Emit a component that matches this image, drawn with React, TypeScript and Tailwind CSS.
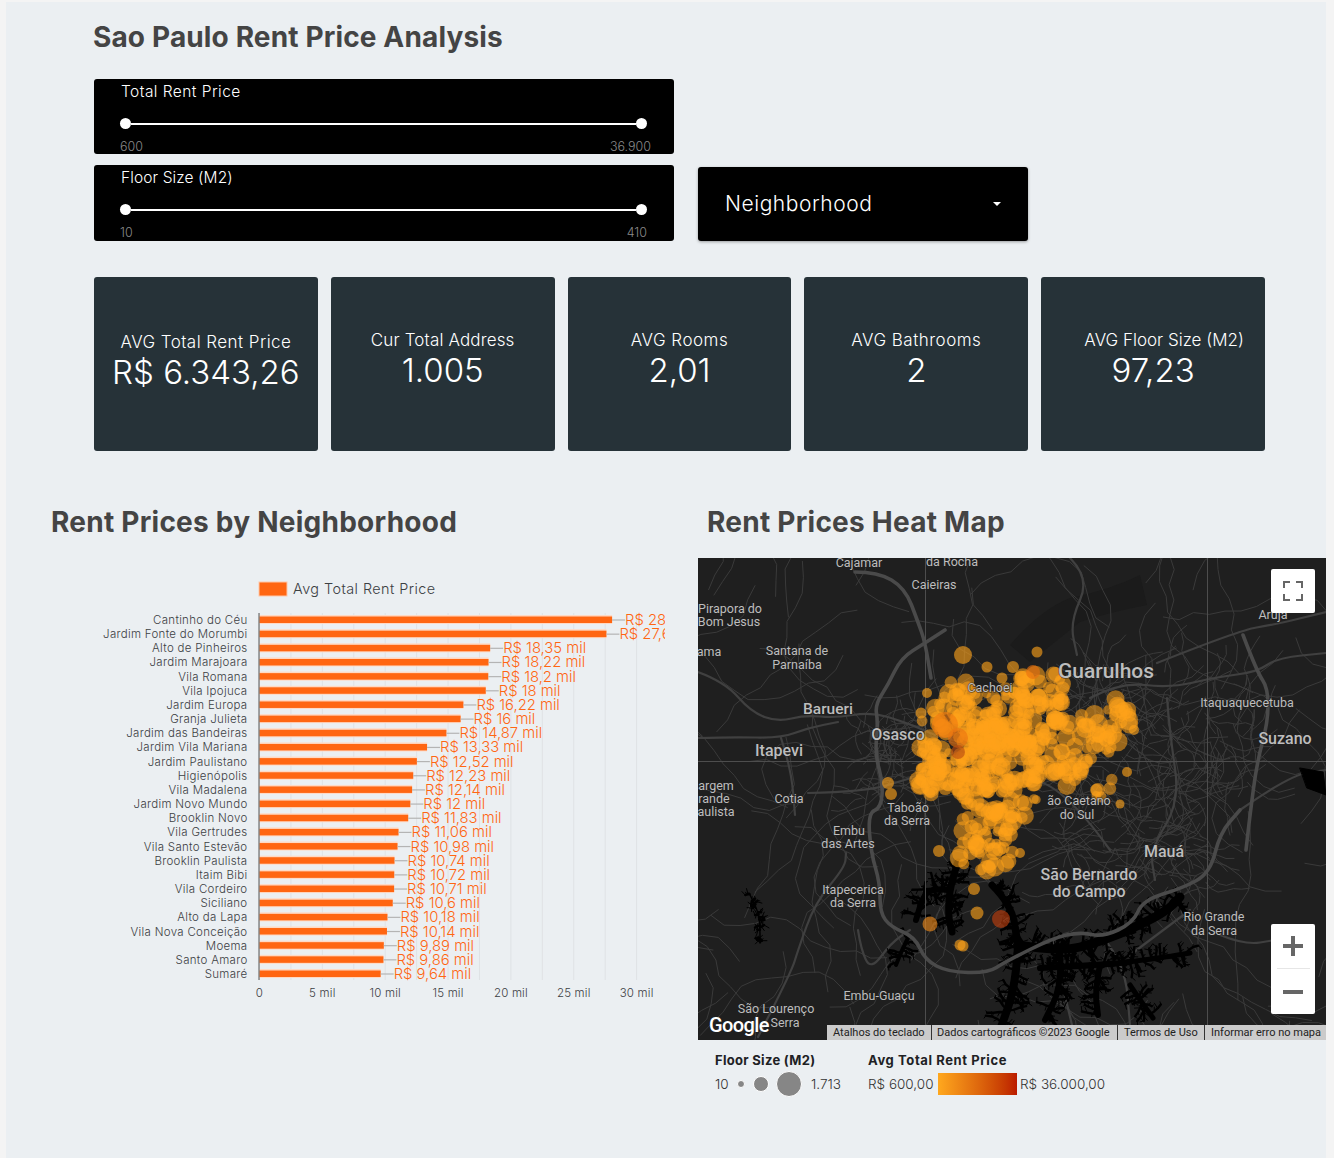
import React from "react";

const FONT = "font-['Inter','Liberation_Sans',sans-serif]";
const ROBOTO = "Roboto, 'Liberation Sans', sans-serif";

const rentRows: [string, number, string][] = [
  ["Cantinho do Céu", 28.05, "R$ 28 mil"],
  ["Jardim Fonte do Morumbi", 27.6, "R$ 27,6 mil"],
  ["Alto de Pinheiros", 18.35, "R$ 18,35 mil"],
  ["Jardim Marajoara", 18.22, "R$ 18,22 mil"],
  ["Vila Romana", 18.2, "R$ 18,2 mil"],
  ["Vila Ipojuca", 18, "R$ 18 mil"],
  ["Jardim Europa", 16.22, "R$ 16,22 mil"],
  ["Granja Julieta", 16, "R$ 16 mil"],
  ["Jardim das Bandeiras", 14.87, "R$ 14,87 mil"],
  ["Jardim Vila Mariana", 13.33, "R$ 13,33 mil"],
  ["Jardim Paulistano", 12.52, "R$ 12,52 mil"],
  ["Higienópolis", 12.23, "R$ 12,23 mil"],
  ["Vila Madalena", 12.14, "R$ 12,14 mil"],
  ["Jardim Novo Mundo", 12, "R$ 12 mil"],
  ["Brooklin Novo", 11.83, "R$ 11,83 mil"],
  ["Vila Gertrudes", 11.06, "R$ 11,06 mil"],
  ["Vila Santo Estevão", 10.98, "R$ 10,98 mil"],
  ["Brooklin Paulista", 10.74, "R$ 10,74 mil"],
  ["Itaim Bibi", 10.72, "R$ 10,72 mil"],
  ["Vila Cordeiro", 10.71, "R$ 10,71 mil"],
  ["Siciliano", 10.6, "R$ 10,6 mil"],
  ["Alto da Lapa", 10.18, "R$ 10,18 mil"],
  ["Vila Nova Conceição", 10.14, "R$ 10,14 mil"],
  ["Moema", 9.89, "R$ 9,89 mil"],
  ["Santo Amaro", 9.86, "R$ 9,86 mil"],
  ["Sumaré", 9.64, "R$ 9,64 mil"],
];

const kpis = [
  { label: "AVG Total Rent Price", value: "R$ 6.343,26", pad: "pb-[6px]", text: "tracking-[0.45px]" },
  { label: "Cur Total Address", value: "1.005", pad: "pb-[10px]", text: "tracking-[0.15px]" },
  { label: "AVG Rooms", value: "2,01", pad: "pb-[10px]", text: "tracking-[0.5px]" },
  { label: "AVG Bathrooms", value: "2", pad: "pb-[10px]", text: "tracking-[0.5px]" },
  { label: "AVG Floor Size (M2)", value: "97,23", pad: "pb-[10px]", text: "ml-[22px]" },
];

// small seeded random so the map looks the same on every load
function makeRandom(seed: number) {
  let s = seed;
  return () => {
    s = (s + 0x6d2b79f5) | 0;
    let t = Math.imul(s ^ (s >>> 15), 1 | s);
    t = (t + Math.imul(t ^ (t >>> 7), 61 | t)) ^ t;
    return ((t ^ (t >>> 14)) >>> 0) / 4294967296;
  };
}

type Pt = [number, number];
const line = (pts: Pt[]) => pts.map((p, i) => `${i ? "L" : "M"}${p[0].toFixed(1)} ${p[1].toFixed(1)}`).join(" ");

// rounds the corners of a road
function smooth(pts: Pt[]) {
  let d = `M${pts[0][0]} ${pts[0][1]}`;
  for (let i = 1; i < pts.length - 1; i++) {
    const mx = (pts[i][0] + pts[i + 1][0]) / 2;
    const my = (pts[i][1] + pts[i + 1][1]) / 2;
    d += ` Q${pts[i][0]} ${pts[i][1]} ${mx} ${my}`;
  }
  const last = pts[pts.length - 1];
  return `${d} L${last[0]} ${last[1]}`;
}

const majorRoads: Pt[][] = [
  [[855, 572], [878, 572], [905, 588], [918, 622], [925, 642], [931, 678]],
  [[945, 630], [925, 643], [901, 658], [888, 685], [875, 705], [878, 722], [875, 755], [883, 782], [881, 808], [868, 813], [871, 853], [880, 883], [880, 913], [891, 927], [915, 937], [925, 960], [948, 972], [988, 973], [1005, 962], [1053, 938], [1080, 932], [1103, 937], [1133, 923], [1143, 900], [1183, 888], [1210, 873], [1220, 833], [1240, 810]],
  [[1243, 635], [1257, 672], [1268, 688], [1268, 722], [1257, 762], [1250, 815], [1246, 850]],
];
const midRoads: Pt[][] = [
  [[1157, 663], [1240, 630], [1273, 625], [1326, 612]],
  [[1090, 698], [1120, 682], [1170, 688], [1217, 677], [1257, 672], [1277, 658], [1326, 653]],
  [[1070, 558], [1090, 578], [1070, 622], [1077, 655]],
  [[1167, 698], [1170, 735], [1180, 802], [1150, 850], [1155, 880]],
  [[698, 672], [725, 682], [751, 712], [778, 722], [805, 715], [835, 718], [871, 712], [905, 722], [935, 735]],
  [[698, 738], [731, 737], [781, 738], [808, 728], [838, 722]],
  [[781, 738], [791, 768], [795, 815]],
  [[808, 793], [865, 792], [911, 778]],
  [[758, 1037], [791, 973], [798, 950], [815, 903], [845, 867], [846, 853]],
  [[858, 930], [861, 950], [871, 970], [891, 943], [910, 930]],
  [[1053, 938], [1060, 975], [1072, 1025]],
  [[1103, 937], [1125, 965], [1130, 1025]],
  [[1110, 850], [1060, 780], [1000, 780]],
  [[1240, 810], [1290, 775], [1326, 770]],
  [[1190, 910], [1130, 955]],
  [[1220, 935], [1245, 945], [1275, 940]],
];

const regions = [
  { x: 698, y: 558, w: 628, h: 482, n: 120, steps: 12, len: 16 },
  { x: 1060, y: 670, w: 200, h: 140, n: 120, steps: 6, len: 9 },
  { x: 860, y: 710, w: 70, h: 90, n: 60, steps: 5, len: 7 },
  { x: 1060, y: 810, w: 150, h: 80, n: 65, steps: 6, len: 8 },
];
const minorRoads = (() => {
  const r = makeRandom(11);
  const out: string[] = [];
  regions.forEach((g) => {
    for (let i = 0; i < g.n; i++) {
      let x = g.x + r() * g.w;
      let y = g.y + r() * g.h;
      let a = r() * Math.PI * 2;
      const pts: Pt[] = [[x, y]];
      for (let k = 0; k < g.steps; k++) {
        a += (r() - 0.5) * 1.3;
        x += Math.cos(a) * g.len;
        y += Math.sin(a) * g.len;
        pts.push([x, y]);
      }
      out.push(line(pts));
    }
  });
  return out;
})();

// reservoirs: each arm is a spine, side inlets fork off it and get thinner
const waterSpines: { pts: Pt[]; w: number }[] = [
  { pts: [[958, 862], [950, 885], [948, 915], [952, 932]], w: 7 },
  { pts: [[950, 890], [930, 888], [922, 900], [916, 920]], w: 6 },
  { pts: [[908, 938], [902, 950], [896, 965]], w: 4 },
  { pts: [[992, 885], [1012, 905], [1018, 945]], w: 7 },
  { pts: [[1018, 945], [1060, 952], [1100, 942], [1140, 925], [1168, 910], [1180, 897]], w: 9 },
  { pts: [[1018, 945], [1016, 985], [1000, 1030]], w: 8 },
  { pts: [[1060, 950], [1062, 985], [1045, 1020]], w: 6 },
  { pts: [[1100, 965], [1095, 990], [1098, 1015]], w: 6 },
  { pts: [[1128, 962], [1160, 958], [1190, 953]], w: 5 },
  { pts: [[1130, 985], [1140, 1000], [1153, 1018]], w: 5 },
  { pts: [[1040, 968], [1100, 965], [1130, 962]], w: 6 },
  { pts: [[749, 893], [758, 910], [760, 925], [760, 943]], w: 1.5 },
];
const waterInlets = (() => {
  const r = makeRandom(5);
  const thick: string[] = [];
  const thin: string[] = [];
  waterSpines.forEach((s) => {
    const reach = s.w < 3 ? 5 : 10 + s.w;
    for (let i = 0; i < s.pts.length - 1; i++) {
      const [a, b] = [s.pts[i], s.pts[i + 1]];
      const count = Math.round(Math.hypot(b[0] - a[0], b[1] - a[1]) / 3);
      const dir = Math.atan2(b[1] - a[1], b[0] - a[0]);
      for (let k = 0; k < count; k++) {
        const t = r();
        const side = r() < 0.5 ? -1 : 1;
        let x = a[0] + (b[0] - a[0]) * t;
        let y = a[1] + (b[1] - a[1]) * t;
        let ang = dir + side * (Math.PI / 2 + (r() - 0.5) * 1.2);
        const pts: Pt[] = [[x, y]];
        const stepLen = (reach * (0.5 + r() * 0.6)) / 3;
        for (let n = 0; n < 3; n++) {
          ang += (r() - 0.5) * 0.9;
          x += Math.cos(ang) * stepLen;
          y += Math.sin(ang) * stepLen;
          pts.push([x, y]);
          const fork = ang + (r() < 0.5 ? -1 : 1) * (0.7 + r() * 0.8);
          const fl = 2 + r() * 4;
          thin.push(`M${x.toFixed(1)} ${y.toFixed(1)} L${(x + Math.cos(fork) * fl).toFixed(1)} ${(y + Math.sin(fork) * fl).toFixed(1)}`);
        }
        thick.push(line(pts));
      }
    }
  });
  return { thick: thick.join(" "), thin: thin.join(" ") };
})();

const clusters = [
  { x: 965, y: 745, rx: 48, ry: 55, n: 85 },
  { x: 1000, y: 770, rx: 46, ry: 55, n: 125 },
  { x: 1005, y: 720, rx: 55, ry: 32, n: 62 },
  { x: 1038, y: 692, rx: 26, ry: 28, n: 34 },
  { x: 1062, y: 745, rx: 36, ry: 28, n: 46 },
  { x: 1105, y: 725, rx: 28, ry: 28, n: 36 },
  { x: 1095, y: 778, rx: 32, ry: 20, n: 14 },
  { x: 985, y: 840, rx: 30, ry: 36, n: 48 },
  { x: 932, y: 775, rx: 18, ry: 34, n: 26 },
  { x: 950, y: 690, rx: 28, ry: 18, n: 10 },
];
const heatDots = (() => {
  const r = makeRandom(42);
  const out: { x: number; y: number; r: number }[] = [];
  clusters.forEach((c) => {
    for (let i = 0; i < c.n; i++) {
      const a = r() * Math.PI * 2;
      const d = Math.sqrt(r());
      out.push({ x: c.x + Math.cos(a) * d * c.rx, y: c.y + Math.sin(a) * d * c.ry, r: 4.5 + r() * 5.5 });
    }
  });
  return out;
})();

const outliers: [number, number, number, string][] = [
  [963, 655, 9, "#ffa31a"], [987, 667, 5.5, "#ffa31a"], [1002, 678, 5.5, "#ffa31a"], [1013, 667, 6, "#ffa31a"],
  [1037, 652, 5.5, "#ffa31a"], [921, 713, 5.5, "#ffa31a"], [888, 783, 6, "#ffa31a"], [891, 794, 6, "#ffa31a"],
  [927, 693, 5, "#ffa31a"], [939, 851, 6, "#ffa31a"], [974, 889, 6, "#ffa31a"], [977, 913, 6.5, "#ffa31a"],
  [930, 924, 7.5, "#f08a1a"], [1001, 919, 9, "#c4400f"], [960, 945, 5.5, "#ffa31a"], [963, 946, 5.5, "#ffa31a"],
  [1134, 730, 5, "#ffa31a"], [1127, 772, 5, "#ffa31a"], [1120, 804, 4.5, "#ffa31a"], [1020, 853, 5, "#ffa31a"],
  [945, 725, 13, "#f07a10"], [958, 738, 10, "#ee7410"], [958, 752, 7, "#b84a10"], [1033, 672, 7, "#e8700f"],
];

const mapLabels: [string, number, number, number, number?][] = [
  ["Cajamar", 859, 567, 12.5], ["da Rocha", 952, 566, 12.5], ["Caieiras", 934, 589, 12.5],
  ["Pirapora do", 730, 613, 12.5], ["Bom Jesus", 729, 626, 12.5], ["ama", 709, 656, 12.5],
  ["Santana de", 797, 655, 12.5], ["Parnaíba", 797, 669, 12.5], ["Barueri", 828, 714, 15.5, 500],
  ["Osasco", 898, 740, 16, 500], ["Itapevi", 779, 756, 16, 500], ["argem", 716, 790, 12.5],
  ["rande", 714, 803, 12.5], ["aulista", 716, 816, 12.5], ["Cotia", 789, 803, 12.5],
  ["Taboão", 908, 812, 12.5], ["da Serra", 907, 825, 12.5], ["Cachoei", 990, 692, 12.5],
  ["Guarulhos", 1106, 678, 21, 500], ["Itaquaquecetuba", 1247, 707, 12.5], ["Suzano", 1285, 744, 16, 500],
  ["Arujá", 1273, 619, 12.5], ["Mauá", 1164, 857, 16, 500], ["ão Caetano", 1079, 805, 12.5], ["do Sul", 1077, 819, 12.5],
  ["São Bernardo", 1089, 880, 16, 500], ["do Campo", 1089, 897, 16, 500], ["Rio Grande", 1214, 921, 12.5],
  ["da Serra", 1214, 935, 12.5], ["Embu", 849, 835, 12.5], ["das Artes", 848, 848, 12.5],
  ["Itapecerica", 853, 894, 12.5], ["da Serra", 853, 907, 12.5], ["Embu-Guaçu", 879, 1000, 12.5],
  ["São Lourenço", 776, 1013, 12.5], ["Serra", 785, 1027, 12.5],
];

function Slider({ label, min, max, wide }: { label: string; min: string; max: string; wide?: boolean }) {
  return (
    <div className="h-full overflow-hidden rounded-[3px] bg-black pr-[27px] pl-[26px]">
      <div className={`pt-[3px] pl-px text-[15.5px] leading-[20px] font-light text-white ${wide ? "tracking-[0.45px]" : "tracking-[0.1px]"}`}>{label}</div>
      <div className="mt-[16px] flex items-center">
        <div className="h-[11px] w-[11px] rounded-full bg-white"></div>
        <div className="h-[2px] flex-1 bg-white"></div>
        <div className="h-[11px] w-[11px] rounded-full bg-white"></div>
      </div>
      <div className={`mt-[10px] flex justify-between text-[12.5px] leading-[16px] font-light text-[#8a8a8a] ${wide ? "-mr-[4px]" : ""}`}>
        <span>{min}</span>
        <span>{max}</span>
      </div>
    </div>
  );
}

function RentChart() {
  const x0 = 259.5;
  const scale = 12.57;
  const ticks = [0, 5, 10, 15, 20, 25, 30];
  return (
    <svg viewBox="90 570 575 440" width={575} height={440} className="block overflow-hidden" fontFamily="Inter, sans-serif">
      <rect x={259} y={582} width={28} height={14} fill="#ff6612" stroke="#ffc7a8" strokeWidth={1} />
      <text x={293} y={594} fontSize={14.4} letterSpacing={0.45} fontWeight={300} fill="#3c4043">Avg Total Rent Price</text>
      {Array.from({ length: 13 }).map((_, i) => (
        <line key={i} x1={x0 + i * 2.5 * scale} x2={x0 + i * 2.5 * scale} y1={613} y2={980} stroke="#dfe2e5" strokeWidth={1} />
      ))}
      {rentRows.map(([name, v, text], i) => {
        const y = 620 + i * 14.16;
        const end = x0 + v * scale;
        return (
          <g key={name}>
            <rect x={x0} y={y - 5} width={end - x0} height={9} fill="#ffd9c4" />
            <rect x={x0} y={y - 3.5} width={end - x0} height={6.5} fill="#ff6612" />
            <line x1={end} x2={end + 13} y1={y} y2={y} stroke="#b4b4b4" strokeWidth={1.2} />
            <text x={247.5} y={y + 4} textAnchor="end" fontSize={11.5} letterSpacing={0.3} fontWeight={300} fill="#3c4043">{name}</text>
            <text x={end + 13} y={y + 5} fontSize={14.8} fontWeight={300} fill="#ff6612">{text}</text>
          </g>
        );
      })}
      <line x1={259} x2={259} y1={613} y2={980} stroke="#555" strokeWidth={1} />
      {ticks.map((t) => (
        <text key={t} x={x0 + t * scale} y={997} textAnchor="middle" fontSize={11.5} letterSpacing={0.2} fontWeight={300} fill="#3c4043">
          {t === 0 ? "0" : `${t} mil`}
        </text>
      ))}
    </svg>
  );
}

function HeatMap() {
  return (
    <div className="relative h-[482px] w-[628px] overflow-hidden bg-[#1f1f1f]">
      <svg viewBox="698 558 628 482" width={628} height={482} className="block">
        <path d="M1010 645 Q1040 610 1070 598 Q1110 590 1140 575 L1147 605 Q1110 612 1080 622 L1030 662 Z" fill="#1b1b1b" />
        <g fill="none" strokeLinejoin="round" strokeLinecap="round">
          {minorRoads.map((d, i) => <path key={i} d={d} stroke="#3a3a3a" strokeWidth={1} />)}
          {midRoads.map((p, i) => <path key={i} d={smooth(p)} stroke="#404040" strokeWidth={2.2} />)}
        </g>
        <g fill="none" stroke="#000" strokeLinecap="round" strokeLinejoin="round">
          {waterSpines.map((s, i) => <path key={i} d={smooth(s.pts)} strokeWidth={s.w} />)}
          <path d={waterInlets.thick} strokeWidth={2.4} />
          <path d={waterInlets.thin} strokeWidth={1} />
          <path d="M1300 768 L1323 772 L1326 795 L1307 788 Z" fill="#000" strokeWidth={1} />
        </g>
        <g fill="none" strokeLinejoin="round" strokeLinecap="round">
          {majorRoads.map((p, i) => <path key={i} d={smooth(p)} stroke="#4a4a4a" strokeWidth={3.6} />)}
        </g>
        <line x1={925.5} x2={925.5} y1={558} y2={1040} stroke="#4d4d4d" />
        <line x1={1207.5} x2={1207.5} y1={558} y2={1040} stroke="#4d4d4d" />
        <line x1={698} x2={1326} y1={761.5} y2={761.5} stroke="#4d4d4d" />
        {heatDots.map((d, i) => <circle key={i} cx={d.x} cy={d.y} r={d.r} fill="#ffa31a" fillOpacity={0.55} />)}
        {outliers.map(([x, y, r, c], i) => <circle key={i} cx={x} cy={y} r={r} fill={c} fillOpacity={0.62} />)}
        {mapLabels.map(([text, x, y, size, weight], i) => (
          <text
            key={i}
            x={x}
            y={y}
            textAnchor="middle"
            fontFamily={ROBOTO}
            fontSize={size}
            fontWeight={weight ?? 400}
            fill="#bdbdbd"
            stroke="#1f1f1f"
            strokeOpacity={0.6}
            strokeWidth={1.5}
            paintOrder="stroke"
          >
            {text}
          </text>
        ))}
      </svg>

      <span className="absolute bottom-[3px] left-[11px] font-['Roboto',sans-serif] text-[20px] leading-[24px] font-medium tracking-[-0.6px] text-white">Google</span>

      {/* fullscreen */}
      <div className="absolute top-[11px] left-[573px] flex h-[44px] w-[44px] items-center justify-center rounded-[2px] bg-white">
        <svg width="20" height="20" viewBox="0 0 20 20" fill="none" stroke="#666" strokeWidth="2">
          <path d="M1 7V1H7M13 1H19V7M19 13V19H13M7 19H1V13" />
        </svg>
      </div>

      {/* zoom */}
      <div className="absolute top-[366px] left-[573px] flex h-[90px] w-[44px] flex-col items-center rounded-[2px] bg-white">
        <div className="flex h-[44px] items-center justify-center">
          <svg width="20" height="20" viewBox="0 0 20 20" fill="#666"><path d="M8 0h4v8h8v4h-8v8H8v-8H0V8h8z" /></svg>
        </div>
        <div className="h-px w-[33px] bg-[#e6e6e6]"></div>
        <div className="flex h-[45px] items-center justify-center">
          <svg width="20" height="20" viewBox="0 0 20 20" fill="#666"><path d="M0 8h20v4H0z" /></svg>
        </div>
      </div>

      {/* attribution */}
      <div className="absolute right-0 bottom-0 flex h-[15px] w-[499px] items-center bg-[#cbcbcb] pl-[6px] font-['Roboto',sans-serif] text-[11px] leading-[15px] text-[#222]">
        <span className="w-[98px]">Atalhos do teclado</span>
        <span className="h-[15px] w-px bg-[#333]"></span>
        <span className="w-[185px] pl-[5px]">Dados cartográficos ©2023 Google</span>
        <span className="h-[15px] w-px bg-[#333]"></span>
        <span className="w-[86px] pl-[6px]">Termos de Uso</span>
        <span className="h-[15px] w-px bg-[#333]"></span>
        <span className="pl-[6px]">Informar erro no mapa</span>
      </div>
    </div>
  );
}

function MapLegend() {
  return (
    <div className="mt-[12px] flex pl-[17px] text-[#333]">
      <div className="w-[153px]">
        <div className="text-[13px] leading-[16px] font-bold tracking-[0.3px] text-[#202124]">Floor Size (M2)</div>
        <div className="mt-[2px] flex h-[28px] items-center text-[13.5px] font-light">
          <span className="w-[22px]">10</span>
          <span className="h-[8px] w-[8px] rounded-full border border-white bg-[#868686]"></span>
          <span className="ml-[8px] h-[16px] w-[16px] rounded-full border border-white bg-[#868686]"></span>
          <span className="ml-[7px] h-[26px] w-[26px] rounded-full border border-white bg-[#868686]"></span>
          <span className="ml-[9px]">1.713</span>
        </div>
      </div>
      <div>
        <div className="text-[13px] leading-[16px] font-bold tracking-[0.6px] text-[#202124]">Avg Total Rent Price</div>
        <div className="mt-[2px] flex h-[28px] items-center text-[13.5px] font-light">
          <span className="w-[70px]">R$ 600,00</span>
          <span className="h-[22px] w-[79px] bg-gradient-to-r from-[#ffa81e] to-[#bb1a00]"></span>
          <span className="ml-[3px]">R$ 36.000,00</span>
        </div>
      </div>
    </div>
  );
}

export default function App() {
  return (
    <div className={`h-[1158px] w-[1334px] overflow-hidden bg-[#f4f4f4] pt-[2px] pr-[8px] pl-[6px] ${FONT}`}>
      <div className="h-full bg-[#ebeff2] pt-[17px]">
        {/* Title */}
        <h1 className="pl-[87px] text-[28px] leading-[36px] font-bold tracking-[0.14px] text-[#444]">Sao Paulo Rent Price Analysis</h1>

        {/* Filters */}
        <div className="mt-[24px] flex items-end pl-[88px]">
          <div className="flex w-[580px] flex-col gap-[11px]">
            <div className="h-[75px]"><Slider label="Total Rent Price" min="600" max="36.900" wide /></div>
            <div className="h-[76px]"><Slider label="Floor Size (M2)" min="10" max="410" /></div>
          </div>
          <div className="ml-[24px] flex h-[74px] w-[330px] items-center justify-between rounded-[3px] bg-black pr-[27px] pl-[27px] shadow-[0_1px_3px_rgba(0,0,0,0.35)]">
            <span className="text-[21px] font-light tracking-[0.55px] text-white">Neighborhood</span>
            <span className="h-0 w-0 border-x-[4px] border-t-[4px] border-x-transparent border-t-white"></span>
          </div>
        </div>

        {/* KPI cards */}
        <div className="mt-[36px] ml-[88px] grid w-[1171px] grid-cols-5 gap-[13px]">
          {kpis.map((k) => (
            <div key={k.label} className={`flex h-[174px] flex-col items-center justify-center rounded-[3px] bg-[#263238] text-white ${k.pad}`}>
              <div className={`text-[17px] leading-[22px] font-light ${k.text}`}>{k.label}</div>
              <div className="text-[33px] leading-[38px] font-light">{k.value}</div>
            </div>
          ))}
        </div>

        {/* Chart + map */}
        <div className="mt-[53px] flex">
          <div className="w-[692px]">
            <h2 className="pl-[45px] text-[28px] leading-[36px] font-bold tracking-[0.25px] text-[#444]">Rent Prices by Neighborhood</h2>
            <div className="mt-[30px] ml-[84px]"><RentChart /></div>
          </div>
          <div className="w-[628px]">
            <h2 className="pl-[9px] text-[28px] leading-[36px] font-bold tracking-[0.25px] text-[#444]">Rent Prices Heat Map</h2>
            <div className="mt-[18px]"><HeatMap /></div>
            <MapLegend />
          </div>
        </div>
      </div>
    </div>
  );
}
